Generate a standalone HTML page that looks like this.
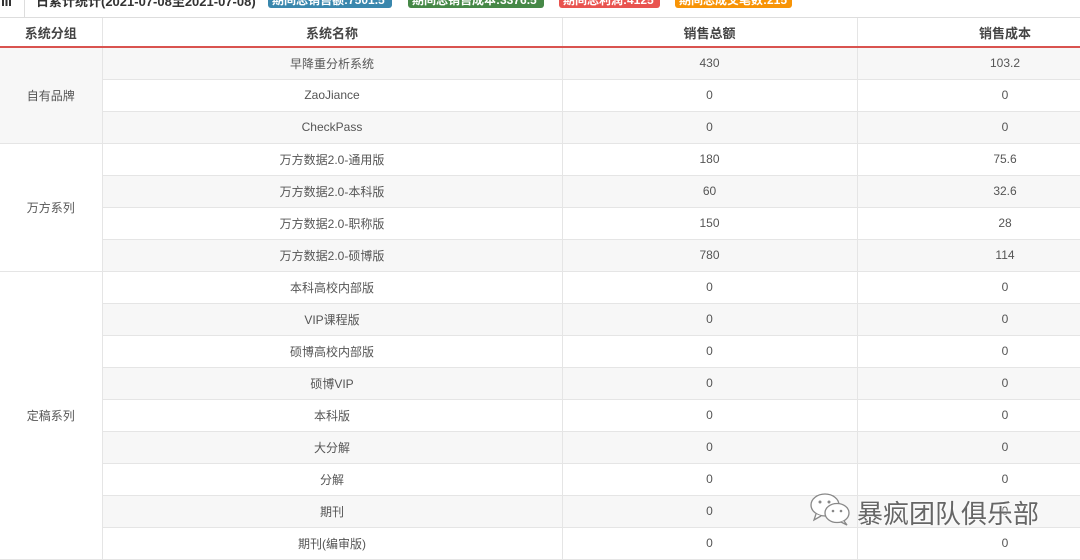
<!DOCTYPE html>
<html><head><meta charset="utf-8"><style>
*{margin:0;padding:0;box-sizing:border-box}
body{width:1080px;height:558px;overflow:hidden;background:#fff;font-family:"Liberation Sans","Noto Sans CJK SC",sans-serif;font-size:12px;color:#555;position:relative}
.top{position:absolute;left:0;top:0;width:1080px;height:18px;border-bottom:1px solid #ddd;background:#fff}
.ico{position:absolute;left:2px;top:-2px;width:9px;height:8px;background:repeating-linear-gradient(90deg,#333 0 2px,transparent 2px 3.5px)}
.div{position:absolute;left:24px;top:0;width:1px;height:18px;background:#ddd}
.title{position:absolute;left:36px;top:-9px;font-size:13px;font-weight:bold;color:#333;white-space:nowrap}
.b{position:absolute;top:-6px;height:14px;border-radius:3px;color:#fff;font-size:12px;font-weight:bold;line-height:12px;padding:0 4px;white-space:nowrap;overflow:hidden}
table{position:absolute;left:0;top:18px;border-collapse:collapse;width:1153px;table-layout:fixed}
th{height:29px;font-weight:bold;color:#444;font-size:13px;border-right:1px solid #e5e5e5;border-bottom:2px solid #d9534f;text-align:center}
td{height:32px;text-align:center;border-right:1px solid #e5e5e5;border-bottom:1px solid #e5e5e5;color:#555}
tbody tr:nth-child(odd) td{background:#f7f7f7}
.wm{position:absolute;font-size:25px;color:#666;white-space:nowrap;text-shadow:0 0 2px #fff,0 0 2px #fff}
</style></head><body>
<div class="top"><div class="ico"></div><div class="div"></div>
<div class="title">日累计统计(2021-07-08至2021-07-08)</div>
<div class="b" style="left:268px;width:124px;background:#3a87ad">期间总销售额:7501.5</div>
<div class="b" style="left:408px;width:136px;background:#468847">期间总销售成本:3376.5</div>
<div class="b" style="left:559px;width:101px;background:#e9534f">期间总利润:4125</div>
<div class="b" style="left:675px;width:117px;background:#f89406">期间总成交笔数:215</div>
</div>
<table>
<colgroup><col style="width:102px"><col style="width:460px"><col style="width:295px"><col style="width:296px"></colgroup>
<thead><tr><th>系统分组</th><th>系统名称</th><th>销售总额</th><th>销售成本</th></tr></thead>
<tbody>
<tr><td rowspan="3">自有品牌</td><td>早降重分析系统</td><td>430</td><td>103.2</td></tr>
<tr><td>ZaoJiance</td><td>0</td><td>0</td></tr>
<tr><td>CheckPass</td><td>0</td><td>0</td></tr>
<tr><td rowspan="4">万方系列</td><td>万方数据2.0-通用版</td><td>180</td><td>75.6</td></tr>
<tr><td>万方数据2.0-本科版</td><td>60</td><td>32.6</td></tr>
<tr><td>万方数据2.0-职称版</td><td>150</td><td>28</td></tr>
<tr><td>万方数据2.0-硕博版</td><td>780</td><td>114</td></tr>
<tr><td rowspan="9">定稿系列</td><td>本科高校内部版</td><td>0</td><td>0</td></tr>
<tr><td>VIP课程版</td><td>0</td><td>0</td></tr>
<tr><td>硕博高校内部版</td><td>0</td><td>0</td></tr>
<tr><td>硕博VIP</td><td>0</td><td>0</td></tr>
<tr><td>本科版</td><td>0</td><td>0</td></tr>
<tr><td>大分解</td><td>0</td><td>0</td></tr>
<tr><td>分解</td><td>0</td><td>0</td></tr>
<tr><td>期刊</td><td>0</td><td>0</td></tr>
<tr><td>期刊(编审版)</td><td>0</td><td>0</td></tr>
</tbody></table>
<svg style="position:absolute;left:808px;top:492px" width="46" height="36" viewBox="0 0 46 36" fill="#fff" stroke="#888" stroke-width="1.3">
<ellipse cx="17" cy="13" rx="14" ry="11"/><path d="M8 22 L6 28 L13 24"/>
<ellipse cx="29" cy="21" rx="12" ry="9.5"/><path d="M36 29 L39 33 L33 30"/>
<circle cx="12" cy="10" r="1.5" fill="#888" stroke="none"/><circle cx="21" cy="10" r="1.5" fill="#888" stroke="none"/>
<circle cx="25" cy="19" r="1.3" fill="#888" stroke="none"/><circle cx="33" cy="19" r="1.3" fill="#888" stroke="none"/>
</svg>
<div class="wm" style="left:857px;top:494px;font-size:26px">暴疯团队俱乐部</div>
</body></html>
